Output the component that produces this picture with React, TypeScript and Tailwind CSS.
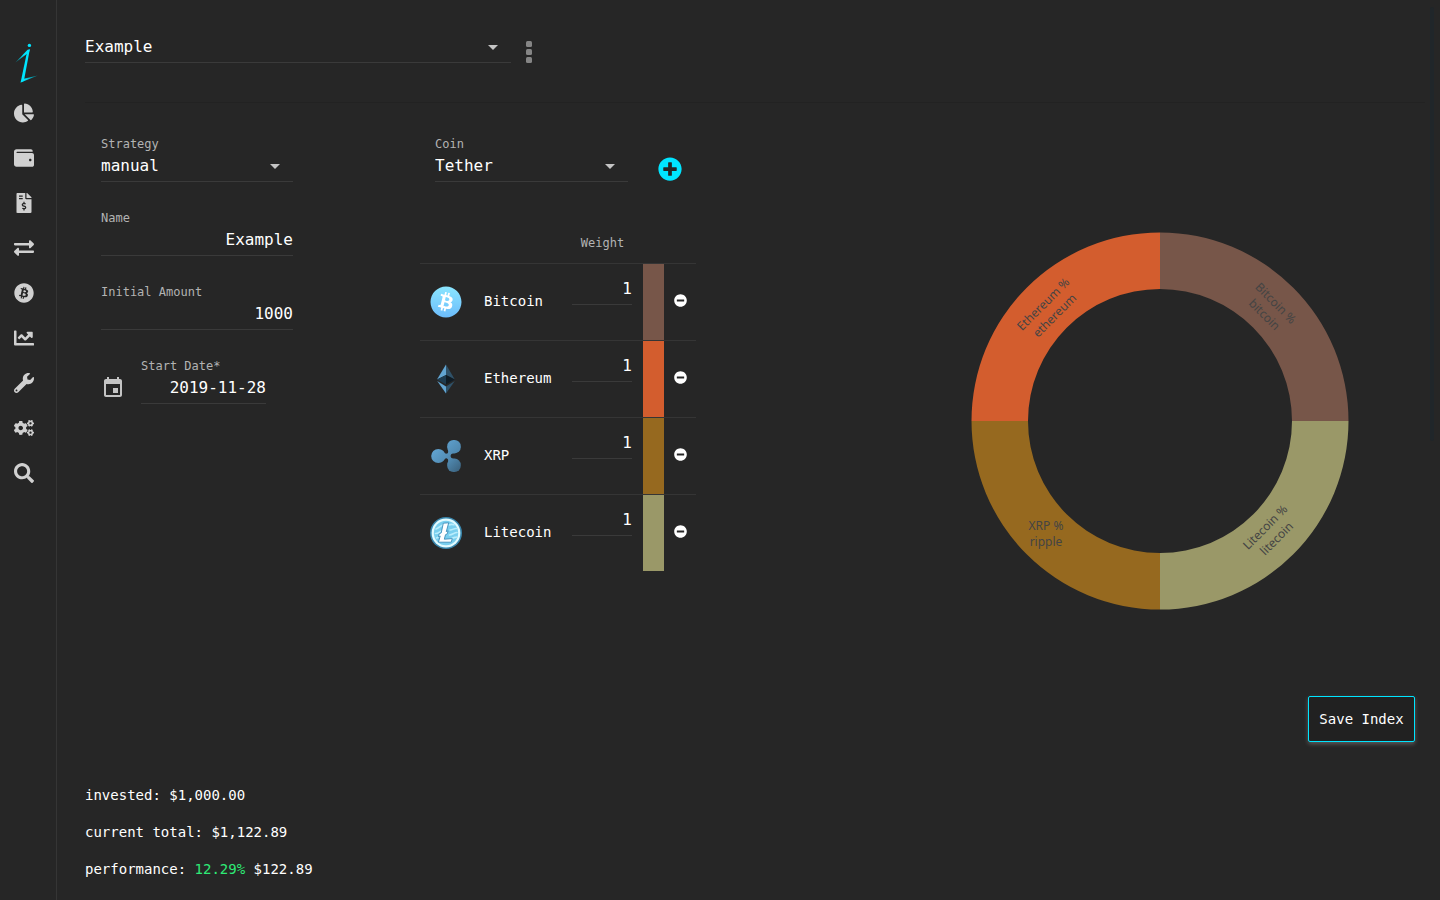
import { useState } from "react";
import type { ReactNode } from "react";
import {
  FaBitcoin,
  FaChartLine,
  FaChartPie,
  FaCogs,
  FaExchangeAlt,
  FaFileInvoiceDollar,
  FaMinusCircle,
  FaPlusCircle,
  FaSearch,
  FaWallet,
  FaWrench,
} from "react-icons/fa";
import { MdArrowDropDown } from "react-icons/md";

const NAV = [
  { label: "Portfolio", Icon: FaChartPie },
  { label: "Wallets", Icon: FaWallet },
  { label: "Invoices", Icon: FaFileInvoiceDollar },
  { label: "Exchanges", Icon: FaExchangeAlt },
  { label: "Coins", Icon: FaBitcoin },
  { label: "Charts", Icon: FaChartLine },
  { label: "Tools", Icon: FaWrench },
  { label: "Settings", Icon: FaCogs },
  { label: "Search", Icon: FaSearch },
];

const COINS = [
  { id: "bitcoin", name: "Bitcoin", color: "#775649", Logo: BitcoinLogo },
  { id: "ethereum", name: "Ethereum", color: "#d35d2e", Logo: EthereumLogo },
  { id: "ripple", name: "XRP", color: "#96691f", Logo: RippleLogo },
  { id: "litecoin", name: "Litecoin", color: "#9a9868", Logo: LitecoinLogo },
];

// clockwise from the top, with the label's centre and rotation
const SLICES = [
  { id: "bitcoin", name: "Bitcoin", color: "#775649", start: 0, x: 110, y: -112, rotate: 45 },
  { id: "litecoin", name: "Litecoin", color: "#9a9868", start: 90, x: 111, y: 112, rotate: -45 },
  { id: "ripple", name: "XRP", color: "#96691f", start: 180, x: -114, y: 113, rotate: 0 },
  { id: "ethereum", name: "Ethereum", color: "#d35d2e", start: 270, x: -111, y: -111, rotate: -45 },
];

const INPUT = "w-full border-b border-[#3a3a3a] bg-transparent text-base text-white outline-none";

function Logo() {
  return (
    <svg viewBox="0 0 24 40" className="h-10 w-6" aria-hidden="true">
      <defs>
        <linearGradient id="tail" x1="0" y1="1" x2="1" y2="0">
          <stop offset="0" stopColor="#0a6f7c" />
          <stop offset="0.6" stopColor="#00e5ff" />
        </linearGradient>
        <linearGradient id="foot" x1="0" y1="1" x2="1" y2="0">
          <stop offset="0.3" stopColor="#00e5ff" />
          <stop offset="1" stopColor="#0a6f7c" />
        </linearGradient>
      </defs>
      <circle cx="14.4" cy="2.4" r="1.7" fill="#00e5ff" />
      <path d="M.4 19.6 12.6 6.8l2.200-.6-.8 3Z" fill="url(#tail)" />
      <path d="m12.200 8 2.600-1.800L8.900 38 5.600 39.400Z" fill="#00e5ff" />
      <path d="m5.600 39.400 2-3.400L22.800 32.600Z" fill="url(#foot)" />
    </svg>
  );
}

function CalendarIcon() {
  return (
    <svg viewBox="0 0 24 24" className="mb-1 size-6 shrink-0 fill-[#c4c4c4]" aria-hidden="true">
      <path d="M17 12h-5v5h5v-5zM16 1v2H8V1H6v2H5c-1.110 0-1.990.9-1.990 2L3 19c0 1.100.89 2 2 2h14c1.100 0 2-.9 2-2V5c0-1.100-.9-2-2-2h-1V1h-2zm3 18H5V8h14v11z" />
    </svg>
  );
}

function BitcoinLogo() {
  return (
    <svg viewBox="0 0 32 32" className="size-8" aria-hidden="true">
      <defs>
        <linearGradient id="btc" x1="0" y1="0" x2="0" y2="1">
          <stop offset="0" stopColor="#8be6ff" />
          <stop offset="1" stopColor="#6cbcfb" />
        </linearGradient>
      </defs>
      <circle cx="16" cy="16" r="13" fill="#fff" />
      <FaBitcoin size={32} className="fill-[url(#btc)]" />
    </svg>
  );
}

function EthereumLogo() {
  return (
    <svg viewBox="0 0 32 32" className="size-8" aria-hidden="true">
      <path d="M16 1.6V12L7 16.4Z" fill="#62a5d2" />
      <path d="M16 1.6V12l8.8 4.4Z" fill="#2f5168" />
      <path d="M16 12v9.6l-9-5.2Z" fill="#1e3c50" />
      <path d="M16 12v9.6l8.8-5.2Z" fill="#101c25" />
      <path d="M16 23.4v7L7.2 18Z" fill="#62a5d2" />
      <path d="M16 23.4v7L24.8 18Z" fill="#2f5168" />
    </svg>
  );
}

function RippleLogo() {
  return (
    <svg viewBox="0 0 32 32" className="size-8" aria-hidden="true">
      <defs>
        <linearGradient id="xrp" gradientUnits="userSpaceOnUse" x1="4" y1="4" x2="30" y2="30">
          <stop offset="0" stopColor="#64a9d8" />
          <stop offset="0.6" stopColor="#5089b0" />
          <stop offset="1" stopColor="#3c6480" />
        </linearGradient>
      </defs>
      <g fill="url(#xrp)">
        <circle cx="8.3" cy="16" r="7.1" />
        <rect x="17.2" y="0" width="13.6" height="13.4" rx="6.2" />
        <rect x="17.2" y="18.6" width="13.6" height="13.4" rx="6.2" />
        <path d="M12.5 10.2c1.8 3 3 3.600 4.400 3.400 1.600-.2 1.400-2 1.100-5.600l5.600 5c-2.400.8-3 1.800-3 3s.6 2.200 3 3L18 24c.3-3.600.5-5.400-1.100-5.600-1.400-.2-2.600.4-4.400 3.400Z" />
      </g>
    </svg>
  );
}

function LitecoinLogo() {
  return (
    <svg viewBox="0 0 32 32" className="size-8" aria-hidden="true">
      <circle cx="16" cy="16" r="16" fill="#3a87ad" />
      <circle cx="16" cy="16" r="14.4" fill="#e2fbff" />
      <circle cx="16" cy="16" r="12.2" fill="#79cfee" />
      <g fill="none" stroke="#b9edfc" strokeWidth="1.6" strokeLinecap="round">
        <path d="M6 12c3-1 5-4 9-5M5.5 16.5c3 0 4-2 6-2.500M6.5 21c2-1 3-2 5-2" />
        <path d="M19 8c2-1 3-1 5-.2M20 13c3 0 4-2 6.500-1.500M19.500 18c3-.5 5-2.500 7.500-2.500M22 21.500c1.500-1 3-1 4.500-1.500" />
      </g>
      <path
        d="m13.300 6.200 5.400-.4-2.400 8.800 1.800-.8-.8 3-1.800.9-1.200 4.500 8-.6-1.100 3.600H8.400l1.800-6.200-1.800.8.8-3 2-.9Z"
        fill="#fff"
        stroke="#3d8fba"
        strokeWidth="0.9"
        strokeLinejoin="round"
      />
    </svg>
  );
}

function SelectField({ id, label, value, className }: { id: string; label?: string; value: string; className: string }) {
  return (
    <div className={className}>
      {label && <label htmlFor={id} className="block text-xs text-[#b3b3b3]">{label}</label>}
      <div className="relative">
        <select id={id} aria-label={label ?? "Index"} defaultValue={value} className={`${INPUT} block h-[30px] appearance-none pb-0.5`}>
          <option>{value}</option>
        </select>
        <MdArrowDropDown className="pointer-events-none absolute right-1.5 top-0.5 size-6 text-[#c4c4c4]" />
      </div>
    </div>
  );
}

function Field({ id, label, children }: { id: string; label: string; children: ReactNode }) {
  return (
    <div>
      <label htmlFor={id} className="block text-xs text-[#b3b3b3]">{label}</label>
      {children}
    </div>
  );
}

function arc(start: number) {
  const outer = 188.5;
  const inner = 132;
  const point = (r: number, deg: number) => {
    const a = (deg * Math.PI) / 180;
    return `${(r * Math.sin(a)).toFixed(2)} ${(-r * Math.cos(a)).toFixed(2)}`;
  };
  const end = start + 90;
  return `M${point(outer, start)}A${outer} ${outer} 0 0 1 ${point(outer, end)}L${point(inner, end)}A${inner} ${inner} 0 0 0 ${point(inner, start)}Z`;
}

function WeightChart() {
  return (
    <svg viewBox="-189 -189 378 378" className="w-[378px] max-w-full" role="img" aria-label="Coin weights">
      {SLICES.map((s) => (
        <path key={s.id} d={arc(s.start)} fill={s.color} />
      ))}
      {SLICES.map((s) => (
        <g key={s.id} transform={`translate(${s.x} ${s.y}) rotate(${s.rotate})`} textAnchor="middle" className="fill-[#444444] font-['Noto_Sans',sans-serif] text-xs">
          <text y="-4">{s.name} %</text>
          <text y="12">{s.id}</text>
        </g>
      ))}
    </svg>
  );
}

export default function App() {
  const [weights, setWeights] = useState<Record<string, string>>({ bitcoin: "1", ethereum: "1", ripple: "1", litecoin: "1" });

  return (
    <div className="flex min-h-screen bg-[#262626] font-['DejaVu_Sans_Mono','Liberation_Mono',monospace] text-sm text-white">
      <aside className="w-[57px] shrink-0 border-r border-[#353535] pt-[43px]">
        <a href="#home" aria-label="Home" className="ml-[15px] block w-6">
          <Logo />
        </a>
        <nav className="mt-[7px]">
          {NAV.map(({ label, Icon }) => (
            <a key={label} href={`#${label.toLowerCase()}`} aria-label={label} className="flex h-[45px] items-center pl-3.5 text-[#d0d0d0]">
              <Icon size={20} />
            </a>
          ))}
        </nav>
      </aside>

      <main className="relative flex-1 pl-7 pr-[15px] pt-[33px]">
        <header className="flex items-end gap-[15px] border-b border-[#222222] pb-[39px]">
          <SelectField id="index" value="Example" className="w-[426px]" />
          <button aria-label="More options">
            <svg viewBox="0 0 6 22" className="h-[22px] w-1.5 fill-[#858585]">
              <rect width="6" height="6" rx="1.5" />
              <rect y="8" width="6" height="6" rx="1.5" />
              <rect y="16" width="6" height="6" rx="1.5" />
            </svg>
          </button>
        </header>

        <div className="grid grid-cols-4 pt-[33px]">
          <form className="flex flex-col gap-7 pl-4">
            <SelectField id="strategy" label="Strategy" value="manual" className="w-48" />
            <div className="w-48">
              <Field id="name" label="Name">
                <input id="name" defaultValue="Example" className={`${INPUT} block h-[30px] pb-0.5 text-right`} />
              </Field>
            </div>
            <div className="w-48">
              <Field id="amount" label="Initial Amount">
                <input id="amount" defaultValue="1000" className={`${INPUT} block h-[30px] pb-0.5 text-right`} />
              </Field>
            </div>
            <div className="flex items-end gap-4">
              <CalendarIcon />
              <div className="w-[125px]">
                <Field id="start" label="Start Date*">
                  <input id="start" defaultValue="2019-11-28" className={`${INPUT} block h-[30px] pb-0.5 text-right`} />
                </Field>
              </div>
            </div>
          </form>

          <div>
            <div className="flex items-end gap-[30px] pl-[15px]">
              <SelectField id="coin" label="Coin" value="Tether" className="w-[193px]" />
              <button aria-label="Add coin" className="pb-px text-[#00e5ff]">
                <FaPlusCircle size={24} />
              </button>
            </div>
            <table className="mt-[42px] w-[276px] table-fixed border-collapse text-left">
              <thead>
                <tr className="h-[39px] text-xs text-[#b3b3b3]">
                  <th className="w-[54px]" />
                  <th className="w-[88px]" />
                  <th className="text-center font-normal">Weight</th>
                  <th className="w-[21px]" />
                  <th className="w-8" />
                </tr>
              </thead>
              <tbody>
                {COINS.map(({ id, name, color, Logo: CoinLogo }) => (
                  <tr key={id} className="h-[77px] border-t border-[#353535]">
                    <td className="pl-2.5"><CoinLogo /></td>
                    <td className="pb-0.5 pl-2.5">{name}</td>
                    <td className="pl-2.5 pr-[11px] pt-[9px] align-top">
                      <input
                        aria-label={`${name} weight`}
                        value={weights[id]}
                        onChange={(e) => setWeights((p) => ({ ...p, [id]: e.target.value }))}
                        className={`${INPUT} block h-8 text-right`}
                      />
                    </td>
                    <td style={{ backgroundColor: color }} />
                    <td className="pb-0.5 pl-2.5">
                      <button aria-label={`Remove ${name}`} className="block">
                        <FaMinusCircle size={13} />
                      </button>
                    </td>
                  </tr>
                ))}
              </tbody>
            </table>
          </div>

          <div className="col-span-2 flex justify-end pr-[76px] pt-24">
            <WeightChart />
          </div>
        </div>

        <div className="mt-[86px] flex justify-end pr-2.5">
          <button className="h-[46px] min-w-[107px] rounded-xs border border-[#00e5ff] bg-[#212121] px-2.5 shadow-[0_2px_4px_rgba(255,255,255,0.25)]">Save Index</button>
        </div>

        <div className="mt-[43px] space-y-4 pb-4 leading-[21px]">
          <p>invested: $1,000.00</p>
          <p>current total: $1,122.89</p>
          <p>performance: <span className="text-[#2eea76]">12.29%</span> $122.89</p>
        </div>

        {/* scroll thumb */}
        <div className="absolute right-1.5 top-[7px] h-[434px] w-1 rounded-full bg-[#20262a]" />
      </main>
    </div>
  );
}
